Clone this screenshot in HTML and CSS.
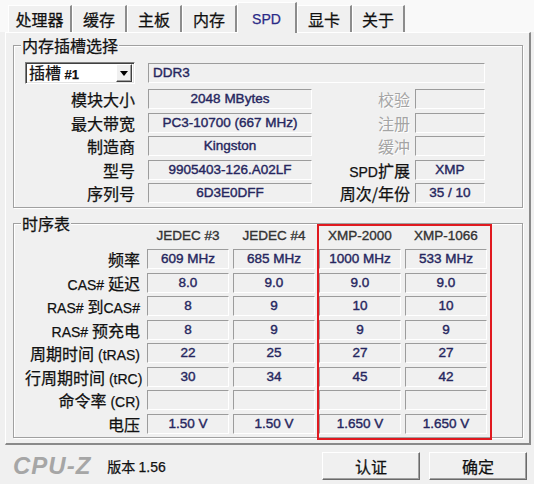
FILE: index.html
```html
<!DOCTYPE html>
<html>
<head>
<meta charset="utf-8">
<title>CPU-Z SPD</title>
<link rel="stylesheet" href="styles.css">
</head>
<body>
<div class="win">
  <div class="tabs">
    <div class="tab w64">处理器</div>
    <div class="tab w55">缓存</div>
    <div class="tab w55">主板</div>
    <div class="tab w55">内存</div>
    <div class="tab sel w60">SPD</div>
    <div class="tab w55">显卡</div>
    <div class="tab w53">关于</div>
  </div>
  <div class="panel">
    <div class="group g1">
      <span class="gtitle">内存插槽选择</span>
      <div class="grid1">
        <div class="combo">
          <span class="ctext">插槽 <span class="cnum">#1</span></span>
          <span class="cbtn"><svg width="8" height="5" viewBox="0 0 8 5"><polygon points="0,0 8,0 4,5" fill="#000"/></svg></span>
        </div>
        <div class="field wide">DDR3</div>

        <div class="lab">模块大小</div><div class="field">2048 MBytes</div><div class="lab lab2 dis">校验</div><div class="field"></div>
        <div class="lab">最大带宽</div><div class="field">PC3-10700 (667 MHz)</div><div class="lab lab2 dis">注册</div><div class="field"></div>
        <div class="lab">制造商</div><div class="field">Kingston</div><div class="lab lab2 dis">缓冲</div><div class="field"></div>
        <div class="lab">型号</div><div class="field">9905403-126.A02LF</div><div class="lab lab2"><span class="l">SPD</span>扩展</div><div class="field">XMP</div>
        <div class="lab">序列号</div><div class="field">6D3E0DFF</div><div class="lab lab2">周次/年份</div><div class="field">35 / 10</div>
      </div>
    </div>
    <div class="group g2">
      <span class="gtitle">时序表</span>
      <div class="grid2">
        <div></div><div class="hd">JEDEC #3</div><div class="hd">JEDEC #4</div><div class="hd">XMP-2000</div><div class="hd">XMP-1066</div>
        <div class="lab">频率</div><div class="field">609 MHz</div><div class="field">685 MHz</div><div class="field">1000 MHz</div><div class="field">533 MHz</div>
        <div class="lab"><span class="l">CAS# </span>延迟</div><div class="field">8.0</div><div class="field">9.0</div><div class="field">9.0</div><div class="field">9.0</div>
        <div class="lab"><span class="l">RAS# </span>到<span class="l">CAS#</span></div><div class="field">8</div><div class="field">9</div><div class="field">10</div><div class="field">10</div>
        <div class="lab"><span class="l">RAS# </span>预充电</div><div class="field">8</div><div class="field">9</div><div class="field">9</div><div class="field">9</div>
        <div class="lab">周期时间<span class="l"> (tRAS)</span></div><div class="field">22</div><div class="field">25</div><div class="field">27</div><div class="field">27</div>
        <div class="lab">行周期时间<span class="l"> (tRC)</span></div><div class="field">30</div><div class="field">34</div><div class="field">45</div><div class="field">42</div>
        <div class="lab">命令率<span class="l"> (CR)</span></div><div class="field"></div><div class="field"></div><div class="field"></div><div class="field"></div>
        <div class="lab">电压</div><div class="field">1.50 V</div><div class="field">1.50 V</div><div class="field">1.650 V</div><div class="field">1.650 V</div>
      </div>
    </div>
  </div>
  <div class="bottom">
    <span class="logo">CPU-Z</span>
    <span class="ver">版本 <span class="vnum">1.56</span></span>
    <div class="btn first">认证</div>
    <div class="btn">确定</div>
  </div>
  <div class="redbox"></div>
</div>
</body>
</html>
```

FILE: styles.css
```css
* { box-sizing: border-box; }
html, body { margin: 0; padding: 0; }
body {
  width: 534px;
  height: 484px;
  overflow: hidden;
  background: #f0f0f0;
  font-family: "Noto Sans CJK SC", "Liberation Sans", sans-serif;
  color: #111;
}
.win {
  position: relative;
  width: 534px;
  height: 484px;
  background: #f0f0f0;
  -webkit-text-stroke: 0.25px currentColor;
}

/* tabs */
.tabs {
  display: flex;
  align-items: flex-end;
  height: 32px;
  padding: 5px 0 0 8px;
  background: #f9f9f9;
}
.tab {
  height: 27px;
  border-left: 1px solid #fff;
  border-top: 1px solid #fff;
  border-right: 2px solid #8c8c8c;
  background: #f0f0f0;
  font-size: 16px;
  line-height: 26px;
  text-align: center;
  white-space: nowrap;
}
.w64 { width: 64px; }
.w55 { width: 55px; }
.w60 { width: 60px; }
.w53 { width: 53px; }
.tab.sel {
  position: relative;
  z-index: 2;
  height: 31px;
  margin-bottom: -1px;
  padding-top: 3px;
  font-family: "Liberation Sans", sans-serif;
  font-size: 14px;
  color: #2a2a86;
}

/* panel */
.panel {
  margin-left: 5px;
  width: 526px;
  height: 413px;
  border-top: 1px solid #fff;
  border-left: 1px solid #fff;
  border-right: 2px solid #8a8a8a;
  border-bottom: 2px solid #8a8a8a;
  padding: 12px 0 0 7px;
}
.group {
  position: relative;
  width: 510px;
  border: 1px solid #a0a0a0;
  box-shadow: inset 1px 1px 0 #fff, 1px 1px 0 #fff;
}
.g1 { height: 163px; padding: 16px 0 0 11px; }
.g2 { height: 215px; margin-top: 15px; padding: 1.5px 0 0 11px; }
.gtitle {
  position: absolute;
  left: 7px;
  top: -11px;
  padding: 0 1px;
  background: #f0f0f0;
  font-size: 16px;
  line-height: 20px;
}

.grid1 {
  display: grid;
  grid-template-columns: 123px 164px 103px 70px;
  grid-template-rows: 23.5px repeat(5, 20px);
  row-gap: 3.5px;
}
.grid2 {
  display: grid;
  grid-template-columns: 118px repeat(4, 82px);
  column-gap: 4px;
  grid-auto-rows: 20px;
  row-gap: 3.5px;
}

.lab {
  text-align: right;
  padding-right: 13px;
  font-size: 16px;
  line-height: 20px;
  white-space: nowrap;
}
.grid2 .lab { padding-right: 3px; }
.lab2 { padding-right: 5px; }
.dis { color: #a4a4a4; text-shadow: 1px 1px 0 #fff; -webkit-text-stroke: 0; }
.l {
  font-family: "Liberation Sans", sans-serif;
  font-size: 14px;
}

.field {
  height: 20px;
  border-top: 1px solid #9c9c9c;
  border-left: 1px solid #9c9c9c;
  border-right: 1px solid #fff;
  border-bottom: 1px solid #fff;
  background: #f0f0f0;
  font-family: "Liberation Sans", sans-serif;
  font-size: 13.5px;
  line-height: 18px;
  color: #26265e;
  -webkit-text-stroke: 0.4px #26265e;
  text-align: center;
  white-space: nowrap;
}
.wide {
  grid-column: 2 / 5;
  text-align: left;
  padding-left: 4px;
  margin-top: 1px;
}
.hd {
  text-align: center;
  font-family: "Liberation Sans", sans-serif;
  font-size: 13.5px;
  line-height: 20px;
  color: #333;
  -webkit-text-stroke: 0.35px #333;
}

/* combo */
.combo {
  display: flex;
  align-items: center;
  justify-content: space-between;
  width: 110px;
  height: 22px;
  border: 1px solid;
  border-color: #808080 #fff #fff #808080;
  box-shadow: inset 1px 1px 0 #404040, inset -1px -1px 0 #e3e3e3;
  background: #fff;
  padding: 2px 2px 2px 3px;
}
.ctext {
  font-size: 16px;
  line-height: 18px;
  white-space: nowrap;
}
.cnum {
  font-family: "Liberation Sans", sans-serif;
  font-size: 13px;
  font-weight: bold;
}
.cbtn {
  display: flex;
  align-items: center;
  justify-content: center;
  width: 16px;
  height: 18px;
  background: #f0f0f0;
  border: 1px solid;
  border-color: #fff #404040 #404040 #fff;
  box-shadow: inset -1px -1px 0 #a0a0a0;
}

/* bottom bar */
.bottom {
  display: flex;
  align-items: center;
  height: 39px;
  padding: 7px 7px 4px 13px;
}
.logo {
  font-family: "Liberation Sans", sans-serif;
  font-style: italic;
  font-weight: bold;
  font-size: 24px;
  letter-spacing: 1px;
  color: #a6a6a6;
  -webkit-text-stroke: 0;
  line-height: 28px;
}
.ver {
  margin-left: 16px;
  font-size: 14px;
  line-height: 28px;
}
.vnum {
  font-family: "Liberation Sans", sans-serif;
  font-size: 14px;
}
.btn {
  width: 98px;
  height: 28px;
  margin-left: 9px;
  background: #f0f0f0;
  border: 1px solid;
  border-color: #fff #6a6a6a #6a6a6a #fff;
  box-shadow: inset -1px -1px 0 #a0a0a0;
  font-size: 16px;
  line-height: 26px;
  text-align: center;
}
.btn.first { margin-left: auto; }

.redbox {
  position: absolute;
  left: 317px;
  top: 224px;
  width: 175px;
  height: 216px;
  border: 2px solid #e0191f;
}
```
